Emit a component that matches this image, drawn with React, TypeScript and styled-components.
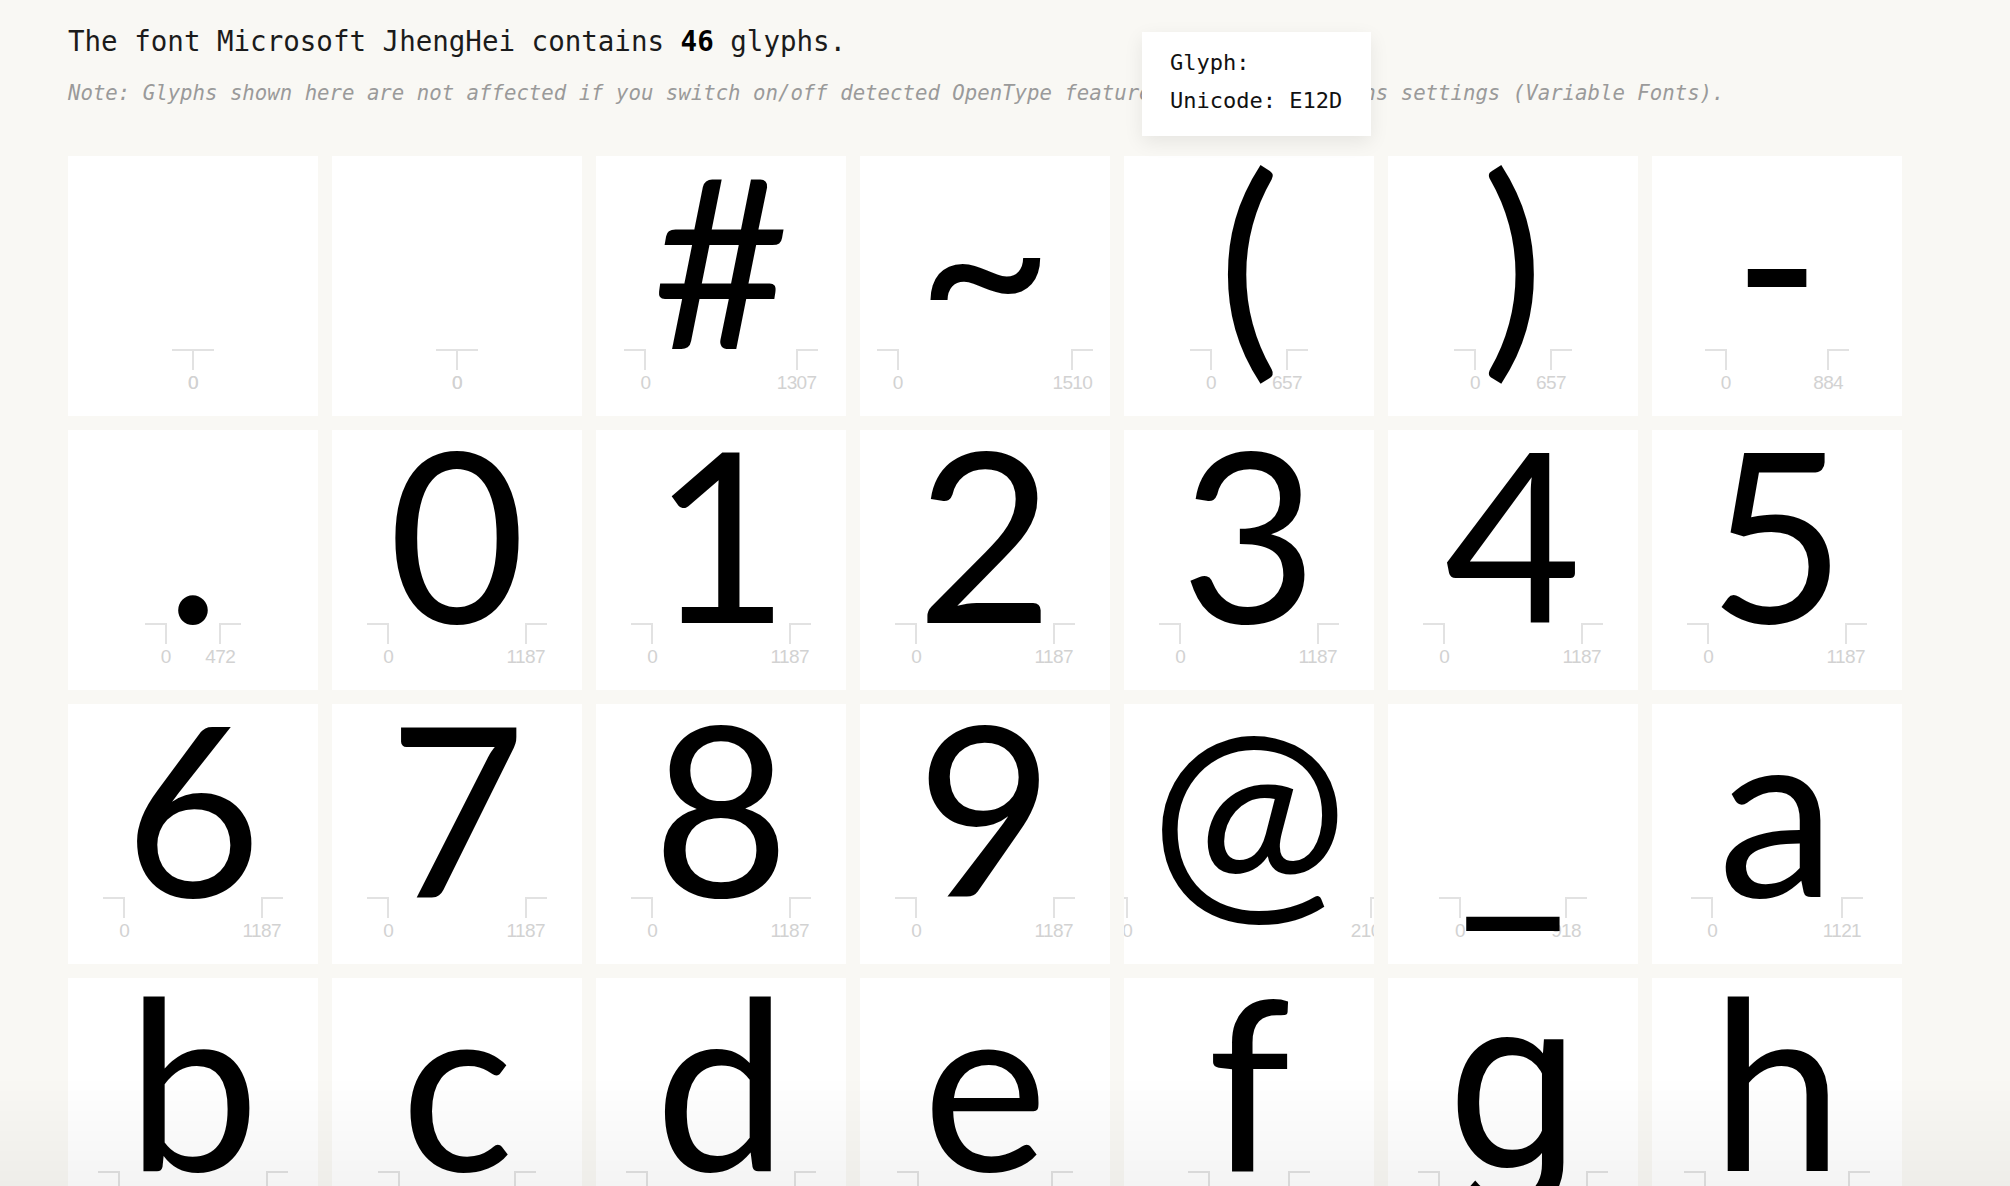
import React from 'react';
import styled, { createGlobalStyle } from 'styled-components';

const GLYPH_SIZE = 237;
const UNITS = 2048;

const GlobalStyle = createGlobalStyle`
  html, body {
    margin: 0;
    padding: 0;
    background: #f9f8f4;
  }
  body {
    font-family: 'DejaVu Sans Mono', 'Liberation Mono', monospace;
    color: #1b1b1b;
  }
`;

const Page = styled.div`
  position: relative;
  padding: 21px 0 60px 68px;
`;

const Heading = styled.p`
  margin: 0;
  font-size: 27.5px;
  line-height: 40px;
  color: #1b1b1b;

  strong {
    font-weight: 700;
    color: #000;
  }
`;

const Note = styled.p`
  margin: 16px 0 0;
  font-size: 20.7px;
  line-height: 32px;
  font-style: italic;
  color: #9a9a9a;
`;

const Grid = styled.ul`
  list-style: none;
  margin: 47px 0 0;
  padding: 0;
  display: grid;
  grid-template-columns: repeat(7, 250px);
  grid-auto-rows: 260px;
  gap: 14px;
`;

const Cell = styled.li`
  display: grid;
  background: #fff;
  overflow: hidden;
`;

const GlyphLayer = styled.div`
  grid-area: 1 / 1;
  display: flex;
  justify-content: center;
  z-index: 1;
`;

const GlyphChar = styled.span<{ $alt?: boolean }>`
  font-family: ${(p) => (p.$alt ? "Roboto, 'Open Sans', sans-serif" : "Lato, 'Open Sans', sans-serif")};
  font-size: ${GLYPH_SIZE}px;
  line-height: ${GLYPH_SIZE}px;
  height: ${GLYPH_SIZE}px;
  margin-top: ${(p) => (p.$alt ? '-12px' : '-17px')};
  white-space: pre;
  color: #000;
`;

const MetricLayer = styled.div`
  grid-area: 1 / 1;
  display: flex;
  justify-content: center;
  padding-top: 193px;
`;

const Advance = styled.div`
  position: relative;
  height: 50px;
`;

const Tick = styled.div<{ $side: 'left' | 'right' }>`
  position: absolute;
  top: 0;
  ${(p) => (p.$side === 'left' ? 'left: 0;' : 'left: 100%;')}
  width: 60px;
  margin-left: -30px;
  display: flex;
  flex-direction: column;

  &::before {
    content: '';
    display: block;
    width: 20px;
    height: 19px;
    border-top: 2px solid #e2e2e2;
    ${(p) =>
      p.$side === 'left'
        ? 'border-right: 2px solid #e2e2e2; margin-left: 9px;'
        : 'border-left: 2px solid #e2e2e2; margin-left: 29px;'}
  }
`;

const TickLabel = styled.span`
  margin-top: 3px;
  text-align: center;
  font-family: 'Liberation Sans', Arial, sans-serif;
  font-size: 19px;
  line-height: 19px;
  letter-spacing: -0.6px;
  color: #d2d2d2;
`;

const Tooltip = styled.div`
  position: absolute;
  top: 32px;
  left: 1142px;
  z-index: 5;
  width: 229px;
  box-sizing: border-box;
  padding: 12px 28px 16px;
  background: #fff;
  box-shadow: 0 6px 18px rgba(0, 0, 0, 0.08);
  font-size: 22px;
  line-height: 38px;
  color: #111;
`;

const Fade = styled.div`
  position: fixed;
  left: 0;
  right: 0;
  bottom: 0;
  height: 110px;
  pointer-events: none;
  z-index: 4;
  background: linear-gradient(rgba(0, 0, 0, 0), rgba(0, 0, 0, 0.045));
`;

interface GlyphInfo {
  ch: string;
  adv: number;
}

const glyphs: GlyphInfo[] = [
  { ch: '', adv: 0 },
  { ch: '', adv: 0 },
  { ch: '#', adv: 1307 },
  { ch: '~', adv: 1510 },
  { ch: '(', adv: 657 },
  { ch: ')', adv: 657 },
  { ch: '-', adv: 884 },
  { ch: '.', adv: 472 },
  ...'012345'.split('').map((ch) => ({ ch, adv: 1187 })),
  ...'6789'.split('').map((ch) => ({ ch, adv: 1187 })),
  { ch: '@', adv: 2104 },
  { ch: '_', adv: 918 },
  { ch: 'a', adv: 1121 },
  { ch: 'b', adv: 1276 },
  { ch: 'c', adv: 1004 },
  { ch: 'd', adv: 1276 },
  { ch: 'e', adv: 1165 },
  { ch: 'f', adv: 690 },
  { ch: 'g', adv: 1276 },
  { ch: 'h', adv: 1249 },
  { ch: 'i', adv: 532 },
  { ch: 'j', adv: 532 },
  { ch: 'k', adv: 1104 },
  { ch: 'l', adv: 532 },
  { ch: 'm', adv: 1890 },
  { ch: 'n', adv: 1249 },
  { ch: 'o', adv: 1296 },
  { ch: 'p', adv: 1276 },
  { ch: 'q', adv: 1276 },
  { ch: 'r', adv: 778 },
  { ch: 's', adv: 932 },
  { ch: 't', adv: 760 },
  { ch: 'u', adv: 1249 },
  { ch: 'v', adv: 1070 },
  { ch: 'w', adv: 1608 },
  { ch: 'x', adv: 1034 },
  { ch: 'y', adv: 1070 },
  { ch: 'z', adv: 958 },
];

// the font's own "g" is single-storey, Lato's is not
const singleStorey = new Set(['g']);

function GlyphCell({ glyph }: { glyph: GlyphInfo }) {
  const width = (glyph.adv / UNITS) * GLYPH_SIZE;
  return (
    <Cell>
      <MetricLayer>
        <Advance style={{ width }}>
          <Tick $side="left">
            <TickLabel>0</TickLabel>
          </Tick>
          <Tick $side="right">
            <TickLabel>{glyph.adv}</TickLabel>
          </Tick>
        </Advance>
      </MetricLayer>
      <GlyphLayer>
        <GlyphChar $alt={singleStorey.has(glyph.ch)}>{glyph.ch}</GlyphChar>
      </GlyphLayer>
    </Cell>
  );
}

export default function App() {
  return (
    <>
      <GlobalStyle />
      <Page>
        <Heading>
          The font Microsoft JhengHei contains <strong>46</strong> glyphs.
        </Heading>
        <Note>
          Note: Glyphs shown here are not affected if you switch on/off detected OpenType
          features and/or variations settings (Variable Fonts).
        </Note>
        <Grid>
          {glyphs.map((g, i) => (
            <GlyphCell key={i} glyph={g} />
          ))}
        </Grid>
        <Tooltip>
          <div>Glyph: </div>
          <div>Unicode: E12D</div>
        </Tooltip>
      </Page>
      <Fade />
    </>
  );
}
